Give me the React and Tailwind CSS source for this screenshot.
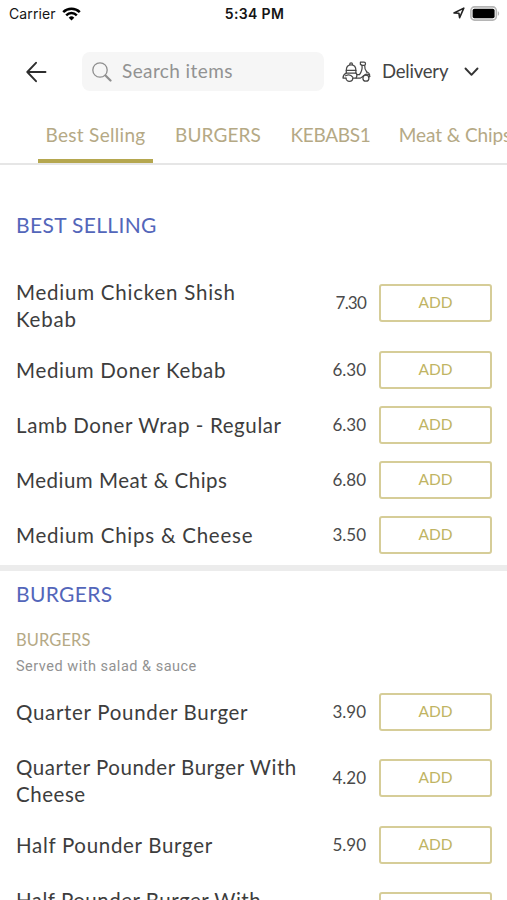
import { Fragment } from 'react';

const tabs = [
  { label: 'Best Selling', width: 'w-[115px]', tracking: 'tracking-[0.3px]', active: true },
  { label: 'BURGERS', width: 'w-[100px]', tracking: 'tracking-[0.1px]' },
  { label: 'KEBABS1', width: 'w-[95px]', tracking: 'tracking-[-0.3px]' },
  { label: 'Meat & Chips', width: 'w-[124px]', tracking: 'tracking-[-0.1px]' },
];

const bestSelling = [
  { lines: ['Medium Chicken Shish', 'Kebab'], price: '7.30', tracking: 'tracking-[0.77px]', priceTracking: 'tracking-[-0.8px]' },
  { lines: ['Medium Doner Kebab'], price: '6.30', tracking: 'tracking-[0.68px]' },
  { lines: ['Lamb Doner Wrap - Regular'], price: '6.30', tracking: 'tracking-[0.6px]' },
  { lines: ['Medium Meat & Chips'], price: '6.80', tracking: 'tracking-[0.5px]' },
  { lines: ['Medium Chips & Cheese'], price: '3.50', tracking: 'tracking-[0.75px]' },
];

const burgers = [
  { lines: ['Quarter Pounder Burger'], price: '3.90', tracking: 'tracking-[0.69px]' },
  { lines: ['Quarter Pounder Burger With', 'Cheese'], price: '4.20', tracking: 'tracking-[0.53px]' },
  { lines: ['Half Pounder Burger'], price: '5.90', tracking: 'tracking-[0.69px]' },
  { lines: ['Half Pounder Burger With', 'Cheese'], price: '6.20', tracking: 'tracking-[0.5px]' },
];

function StatusBar() {
  return (
    <div className="h-7 grid grid-cols-3 items-center pl-[9px] pr-[7px] font-['Inter',sans-serif] text-[14px] text-[#151515]">
      <div className="flex items-center gap-[6px] pb-px">
        <span className="tracking-[0.1px]">Carrier</span>
        <svg width="19" height="14" viewBox="0 0 19 14" fill="none" stroke="#000" strokeWidth="2.5">
          <path d="M1.2 5.1a11.8 11.8 0 0 1 16.6 0" />
          <path d="M4.2 8.3a7.5 7.5 0 0 1 10.6 0" />
          <path d="M6.7 10.7a4 4 0 0 1 5.6 0L9.5 13.5z" fill="#000" stroke="none" />
        </svg>
      </div>
      <div className="pb-px text-center font-semibold tracking-[0.35px] whitespace-nowrap">5:34 PM</div>
      <div className="flex items-center justify-end gap-[5px] pb-[2px]">
        <svg width="12" height="12" viewBox="0 0 12 12" fill="none" stroke="#222" strokeWidth="1.6" strokeLinejoin="round">
          <path d="M1 6 10.8 1.1 6.6 10.7 5.9 6.2z" />
        </svg>
        <svg width="30" height="15" viewBox="0 0 30 15">
          <rect x="0.9" y="0.9" width="25.4" height="13.2" rx="3.6" fill="#fff" stroke="#b5b5b5" strokeWidth="1.6" />
          <rect x="2.6" y="2.7" width="22" height="9.6" rx="1.8" fill="#000" />
          <path d="M27.8 5.2c1.8.6 1.8 4 0 4.6z" fill="#b5b5b5" />
        </svg>
      </div>
    </div>
  );
}

function Scooter() {
  return (
    <svg width="29" height="22" viewBox="0 0 29 22" fill="none" stroke="#484848" strokeWidth="1.25" strokeLinecap="round" strokeLinejoin="round">
      <path d="M4.3 9.4c0-3.3 1.9-5.6 4.8-5.6s4.8 2.3 4.8 5.6z" />
      <path d="M7.7 3.6c0-2.2 2.8-2.2 2.8 0" />
      <path d="M4.3 9.4v2.8h9.6V9.4" />
      <path d="M4.3 12C2.4 13 1 14.6 1 17h3M13.9 12c1.3 1 1.2 3 .2 5h-3.4" />
      <path d="M4 17a3.4 3.4 0 0 0 6.8 0" />
      <path d="M3.6 14.8c2.4-1.3 5.4-1 7.1 1.4" />
      <path d="M18.4 1.2h3.6c2 0 2 3.2 0 3.2h-1.9l-1.7-1z" />
      <path d="M20 4.4c.5 3.3-.6 6.6-2.5 9.3h-2.9M22.7 4.4c-.3 3.2.8 5 2.1 6.6" />
      <path d="M14.1 17h4.4c2.2-.8 3.3-2.8 5.2-3.6 2-.8 3.9.2 4.2 2.1l-1.4.6M24.8 11c1.4.2 2.6 1.6 2.9 3.2" />
      <circle cx="23.9" cy="17.2" r="3" />
    </svg>
  );
}

function Header() {
  return (
    <header className="h-[74px] flex items-center pt-[13px] font-['Lato',sans-serif] text-[19px]">
      <svg className="ml-[26px] mr-[35px] shrink-0" width="21" height="22" viewBox="0 0 21 22" fill="none" stroke="#2d2d2d" strokeWidth="1.9" strokeLinecap="round" strokeLinejoin="round">
        <path d="M19.5 11H2M10 1.8 1.3 11l8.7 9.2" />
      </svg>
      <div className="w-[242px] h-[39px] shrink-0 flex items-center pl-[10px] rounded-lg bg-[#f6f6f6]">
        <svg className="shrink-0 mr-[10px]" width="20" height="20" viewBox="0 0 20 20" fill="none" stroke="#8f8f8f" strokeLinecap="round">
          <circle cx="8" cy="8" r="7.2" strokeWidth="1.3" />
          <path d="m13.5 13.5 5 5" strokeWidth="2.2" />
        </svg>
        <span className="text-[#929292] tracking-[0.4px]">Search items</span>
      </div>
      <div className="flex items-center pl-[18px] pt-px">
        <Scooter />
        <span className="w-[67px] ml-[11px] text-[#444] tracking-[-0.2px] text-[18.5px] whitespace-nowrap">Delivery</span>
        <svg className="ml-[15px]" width="15" height="10" viewBox="0 0 15 10" fill="none" stroke="#333" strokeWidth="1.9" strokeLinecap="round" strokeLinejoin="round">
          <path d="m1.5 1.5 6 6.3 6-6.3" />
        </svg>
      </div>
    </header>
  );
}

function Tabs() {
  return (
    <nav className="h-[63px] pl-[38px] flex items-stretch gap-[15px] overflow-hidden border-b-2 border-[#e6e6e6] font-['Lato',sans-serif] text-[19px] text-[#b5a985]">
      {tabs.map(tab => (
        <div
          key={tab.label}
          className={`${tab.width} ${tab.tracking} shrink-0 pt-[20px] text-center leading-[26px] whitespace-nowrap border-b-4 ${
            tab.active ? 'border-[#b5a74f]' : 'border-transparent'
          }`}
        >
          {tab.label}
        </div>
      ))}
    </nav>
  );
}

function MenuItem({ item }) {
  const tall = item.lines.length > 1;
  return (
    <li className={`flex items-center pl-4 pr-[15px] font-['Lato',sans-serif] ${tall ? 'h-[78px]' : 'h-[55px]'}`}>
      <div className={`flex-1 text-[20.5px] leading-[27px] text-[#3d3d3d] whitespace-nowrap ${item.tracking} ${tall ? 'pt-[5px]' : 'pt-[2px]'}`}>
        {item.lines.map((line, i) => (
          <Fragment key={line}>
            {i > 0 && <br />}
            {line}
          </Fragment>
        ))}
      </div>
      <span className={`mr-[13px] text-[17px] text-[#4a4a4a] ${item.priceTracking || 'tracking-normal'}`}>{item.price}</span>
      <button className="w-[113px] h-[38px] pb-[2px] rounded-[3px] border-2 border-[#d6cd98] text-[15.5px] leading-5 text-[#c0b463]">
        ADD
      </button>
    </li>
  );
}

function SectionTitle({ children }) {
  return <h2 className="pl-4 font-['Lato',sans-serif] text-[21px] leading-7 tracking-[0.35px] text-[#5366ba] whitespace-nowrap">{children}</h2>;
}

export default function App() {
  return (
    <div className="w-full h-[900px] overflow-hidden bg-white">
      <StatusBar />
      <Header />
      <Tabs />

      <section className="pt-[46px]">
        <SectionTitle>BEST SELLING</SectionTitle>
        <ul className="mt-[25px]">
          {bestSelling.map(item => <MenuItem key={item.lines[0]} item={item} />)}
        </ul>
      </section>

      <div className="mt-[3px] h-[6px] bg-[#ececec]" />

      <section className="pt-[9px]">
        <SectionTitle>BURGERS</SectionTitle>
        <div className="mt-[20px] pl-4 font-['Lato',sans-serif] text-[16.5px] leading-6 tracking-[0.1px] text-[#b5a985]">BURGERS</div>
        <p className="mt-[5px] pl-4 font-['Roboto',sans-serif] text-[14.5px] leading-5 tracking-[0.5px] text-[#929292]">Served with salad &amp; sauce</p>
        <ul className="mt-[7px]">
          {burgers.map(item => <MenuItem key={item.lines[0]} item={item} />)}
        </ul>
      </section>
    </div>
  );
}
